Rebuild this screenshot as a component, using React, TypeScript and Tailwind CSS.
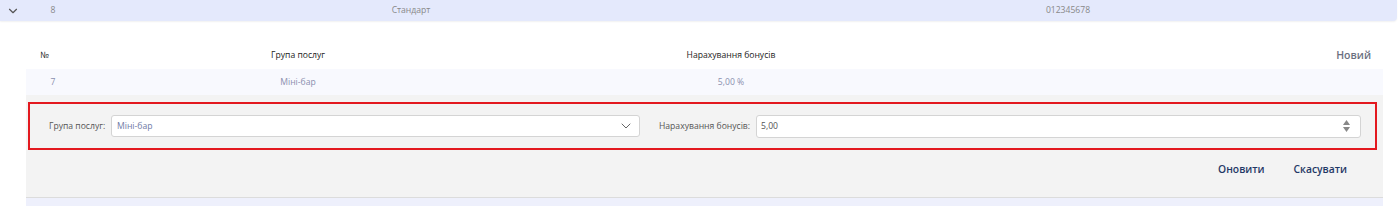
import { ChevronDown } from 'lucide-react';

export default function App() {
  return (
    <div className="w-[1400px] h-[206px] bg-white overflow-hidden text-[8.6px] text-[#333]" style={{ fontFamily: '"Open Sans", "Liberation Sans", sans-serif' }}>
      {/* головний рядок */}
      <div className="w-[1397px] h-[21px] flex items-center bg-[#e4e9fc] rounded-br shadow-[0_1px_2px_rgba(0,0,0,0.06)]">
        <div className="w-[26px] flex justify-center">
          <ChevronDown className="h-3.5 w-3.5 text-[#555]" strokeWidth={2} />
        </div>
        <div className="w-[54px] text-center text-[#888]">8</div>
        <div className="w-[662px] text-center text-[#888]">Стандарт</div>
        <div className="w-[652px] text-center text-[#888]">012345678</div>
      </div>

      {/* вкладена таблиця */}
      <div className="ml-[26px] w-[1357px] mt-[21px]">
        <div className="h-[27px] flex items-center text-[#222]">
          <div className="w-[54px] pl-[14px]">№</div>
          <div className="w-[436px] text-center">Група послуг</div>
          <div className="w-[430px] text-center">Нарахування бонусів</div>
          <div className="flex-1 text-right pr-[12px] text-[10.5px] font-semibold text-[#6b6f80]">Новий</div>
        </div>
        <div className="h-[26px] flex items-center bg-[#f8f9fe] text-[#8a8fae]">
          <div className="w-[54px] text-center">7</div>
          <div className="w-[436px] text-center">Міні-бар</div>
          <div className="w-[430px] text-center">5,00 %</div>
        </div>

        {/* форма редагування */}
        <div className="bg-[#f3f3f3] border-b border-[#dcdcdc] h-[103px] pt-[7px]">
          <div className="ml-[2px] mr-[6px] h-[48px] border-2 border-[#e3191f] flex items-center">
            <span className="ml-[19px] w-[62px] text-[#555]">Група послуг:</span>
            <div className="w-[529px] h-[22px] bg-white border border-[#d4d4d4] rounded-[3px] flex items-center justify-between px-[5px]">
              <span className="text-[#6f7aa6]">Міні-бар</span>
              <ChevronDown className="h-4 w-4 text-[#666]" strokeWidth={1.5} />
            </div>
            <span className="ml-[19px] w-[97px] text-[#555]">Нарахування бонусів:</span>
            <div className="w-[605px] h-[23px] bg-white border border-[#d4d4d4] rounded-[3px] flex items-center justify-between pl-[4px] pr-[10px]">
              <span className="text-[#555]">5,00</span>
              <div className="flex flex-col gap-[2px] items-center">
                <svg width="7" height="5" viewBox="0 0 7 5"><path d="M3.5 0L7 5H0z" fill="#888" /></svg>
                <svg width="7" height="5" viewBox="0 0 7 5"><path d="M0 0h7L3.5 5z" fill="#888" /></svg>
              </div>
            </div>
          </div>
          <div className="flex justify-end gap-[29px] pr-[36px] mt-[12px] text-[10.3px] font-semibold text-[#1f3866]">
            <span>Оновити</span>
            <span>Скасувати</span>
          </div>
        </div>
        <div className="h-[10px] bg-[#eef0fc]" />
      </div>
    </div>
  );
}
